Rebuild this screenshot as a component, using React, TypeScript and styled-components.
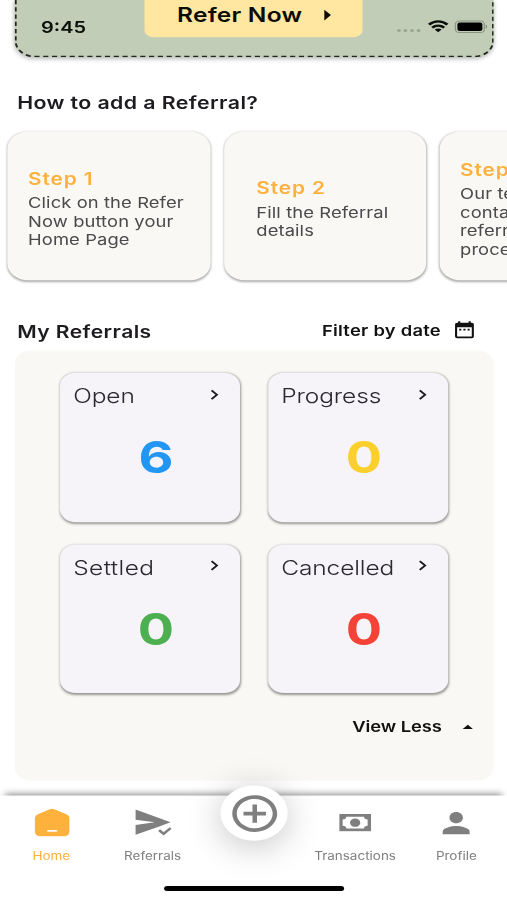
import React from "react";
import styled, { createGlobalStyle } from "styled-components";
import { MdAddCircleOutline, MdArrowDropUp, MdArrowRight, MdChevronRight, MdDateRange, MdPerson } from "react-icons/md";

const GlobalStyle = createGlobalStyle`
  * { box-sizing: border-box; }
  body { margin: 0; background: #fff; }
`;

const Viewport = styled.div`
  width: 507px;
  height: 900px;
  overflow: hidden;
  background: #fff;
`;

/* The phone screen is laid out in 414x896 points and fitted to the viewport. */
const Screen = styled.main`
  position: relative;
  display: flex;
  flex-direction: column;
  width: 414px;
  height: 896px;
  transform: scale(1.2246377, 1.0044643);
  transform-origin: 0 0;
  font-family: Inter, "Noto Sans", sans-serif;
  color: #1d1b20;
`;

const Content = styled.div`
  flex: 1;
  min-height: 0;
`;

const Banner = styled.section`
  position: relative;
  display: flex;
  justify-content: center;
  align-items: flex-start;
  height: 57px;
  margin: 0 10.8px 0 11.8px;
  padding-right: 1.4px;
  border-radius: 0 0 16px 16px;
  background: #c1cdb6;
  box-shadow: 0 1px 4px rgba(0, 0, 0, 0.28);
`;

const BannerOutline = styled.svg`
  position: absolute;
  inset: 0;
  width: 391.4px;
  height: 57px;
`;

const ReferButton = styled.button`
  display: flex;
  align-items: center;
  gap: 7.5px;
  width: 178px;
  height: 37px;
  padding: 0 0 6.5px 26.8px;
  border: 0;
  border-radius: 0 0 7px 7px;
  background: #ffe6a1;
  color: #0c0b06;
  font: 600 20px/28px Inter, sans-serif;
  letter-spacing: 0.18px;
  white-space: nowrap;
`;

const StatusBar = styled.div`
  position: absolute;
  z-index: 3;
  top: 15px;
  left: 33.5px;
  right: 16px;
  display: flex;
  align-items: center;
  height: 23px;
  color: #0b0f0a;
`;

const Clock = styled.time`
  flex: 1;
  padding-top: 1px;
  font-size: 16.3px;
  line-height: 23px;
  font-weight: 600;
`;

const SectionHeader = styled.header<{ $top: number }>`
  display: flex;
  align-items: center;
  height: 22px;
  margin: ${(p) => p.$top}px 25px 0 14px;
`;

const Title = styled.h2<{ $size: number; $spacing: number }>`
  flex: 1;
  margin: 0;
  font-size: ${(p) => p.$size}px;
  line-height: 22px;
  font-weight: 600;
  letter-spacing: ${(p) => p.$spacing}px;
`;

const FilterButton = styled.button`
  display: flex;
  align-items: center;
  gap: 8.5px;
  padding: 0;
  border: 0;
  background: none;
  color: #111;
  font: 600 15px/22px Inter, sans-serif;
  letter-spacing: 0.2px;

  svg { margin-top: -2px; }
`;

const StepStrip = styled.section`
  display: flex;
  gap: 11px;
  margin-top: 12px;
  padding: 5px 0 8px 6.3px;
  overflow: hidden;
`;

const StepCard = styled.article`
  display: flex;
  flex-direction: column;
  justify-content: center;
  align-items: center;
  flex: 0 0 165.4px;
  height: 148px;
  padding: 4.5px 5.2px 0 0;
  border-radius: 17px;
  background: #f9f8f5;
  box-shadow: 0 1px 2px rgba(0, 0, 0, 0.28), 0 1px 3px rgba(0, 0, 0, 0.08);
`;

const StepBody = styled.div<{ $width: number }>`
  width: ${(p) => p.$width}px;
`;

const StepName = styled.h3`
  margin: 0 0 2.5px;
  color: #ffb13d;
  font-size: 17px;
  line-height: 25px;
  font-weight: 600;
  letter-spacing: 0.75px;
`;

const StepText = styled.p`
  margin: 0;
  color: #4a494b;
  font-size: 15px;
  line-height: 18.5px;
  letter-spacing: 0.08px;
  white-space: pre;
`;

const Panel = styled.section`
  height: 427.5px;
  margin: 8.8px 10.6px 0 11.5px;
  padding: 22px 0 0 37.3px;
  border-radius: 13px;
  background: #f9f8f4;
`;

const TileGrid = styled.div`
  display: grid;
  grid-template-columns: 147.7px 147.7px;
  grid-auto-rows: 148.6px;
  gap: 22px 22.1px;
`;

const Tile = styled.article`
  padding: 12px 0 0 11px;
  border-radius: 13px;
  background: #f6f3f9;
  box-shadow: 0 1px 2px rgba(0, 0, 0, 0.32), 0 1px 3px rgba(0, 0, 0, 0.1);
`;

const TileHead = styled.div`
  display: flex;
  align-items: center;
  justify-content: space-between;
  height: 22px;
  padding-right: 11.7px;

  svg { margin-top: -3px; }
`;

const TileLabel = styled.span<{ $spacing?: number }>`
  font-size: 20px;
  font-weight: 300;
  letter-spacing: ${(p) => p.$spacing ?? -0.08}px;
  color: #2b2930;
`;

const TileCount = styled.strong<{ $color: string }>`
  display: block;
  width: 135px;
  margin-top: 21.9px;
  color: ${(p) => p.$color};
  font-size: 44px;
  line-height: 56px;
  font-weight: 700;
  text-align: center;
`;

const ViewLess = styled.button`
  display: flex;
  align-items: center;
  gap: 11px;
  margin: 22.6px 0 0 238.9px;
  padding: 0;
  border: 0;
  background: none;
  color: #111;
  font: 600 15px/22px Inter, sans-serif;
  letter-spacing: -0.08px;
  white-space: nowrap;
`;

const TabBar = styled.nav`
  position: relative;
  display: grid;
  grid-template-columns: repeat(5, 1fr);
  height: 104px;
  padding-left: 0.6px;
  background: #fff;
  box-shadow: 0 -6px 6px -4px rgba(0, 0, 0, 0.46);
`;

const Tab = styled.a<{ $active?: boolean }>`
  position: relative;
  z-index: 1;
  display: flex;
  flex-direction: column;
  align-items: center;
  padding-top: 9px;
  color: ${(p) => (p.$active ? "#ffb13d" : "#7f7f7f")};
  font-size: 11px;
  line-height: 14px;
`;

const TabIcon = styled.span`
  display: flex;
  align-items: center;
  justify-content: center;
  height: 36px;
  margin-bottom: 7.5px;
`;

const AddSlot = styled.div`
  display: flex;
  justify-content: center;
`;

const AddButton = styled.button`
  display: flex;
  align-items: center;
  justify-content: center;
  width: 55.4px;
  height: 55px;
  margin: -10px 0 0 0.8px;
  padding: 0;
  border: 0;
  border-radius: 50%;
  background: #fff;
  color: #7f7f7f;
  box-shadow: 0 5px 32px rgba(0, 0, 0, 0.24);
`;

const HomeIndicator = styled.div`
  position: absolute;
  z-index: 2;
  left: 133.5px;
  bottom: 9px;
  width: 147.5px;
  height: 5.5px;
  border-radius: 3px;
  background: #000;
`;

const StatusIcons = () => (
  <svg width="74" height="18" viewBox="0 0 74 18" fill="none">
    <g fill="#9aa492">
      <circle cx="1.8" cy="12.4" r="1.5" />
      <circle cx="7" cy="12.4" r="1.5" />
      <circle cx="12.4" cy="12.4" r="1.5" />
      <circle cx="17.8" cy="12.4" r="1.5" />
    </g>
    <g stroke="#0b0f0a" strokeWidth="2.4">
      <path d="M26.3 6.6C30.7 2.2 36.9 2.2 41.3 6.6" />
      <path d="M28.9 9.6C31.9 6.8 35.7 6.8 38.7 9.6" />
    </g>
    <path d="M31 11.4C32.6 10 35 10 36.600 11.4L33.8 14.2Z" fill="#0b0f0a" />
    <rect x="47.9" y="2.8" width="23.6" height="11.6" rx="3.3" stroke="#8a9482" />
    <rect x="49.5" y="4.4" width="20.4" height="8.4" rx="1.9" fill="#000" />
    <path d="M72.6 6.7v3.8c1-.3 1.4-1.1 1.4-1.9s-.4-1.6-1.4-1.9Z" fill="#8a9482" />
  </svg>
);

const HomeIcon = () => (
  <svg width="30" height="30" viewBox="0 0 30 30">
    <path d="M13.6 1.6a4.4 4.4 0 0 1 3.800 0L27.6 6.900A3.800 3.800 0 0 1 29.700 10.300V24.400a4.200 4.200 0 0 1-4.200 4.200H5.700a4.200 4.200 0 0 1-4.200-4.200V10.300a3.800 3.800 0 0 1 2.100-3.400Z" fill="#ffb13d" />
    <path d="M12.200 23.200h6.800" stroke="#fff" strokeWidth="1.600" strokeLinecap="round" />
  </svg>
);

const SendCheckIcon = () => (
  <svg width="30" height="26" viewBox="0 0 30 26">
    <path d="M.7 0 29.300 12.700 19.500 17.200.7 25V15.400L16.500 12.700.7 10Z" fill="#7f7f7f" />
    <path d="m18.300 20.100 4.600 4.600 6.900-6.600" fill="none" stroke="#fff" strokeWidth="5" />
    <path d="m19.900 20.400 3.700 3.800 5.800-5.900" fill="none" stroke="#7f7f7f" strokeWidth="2.300" />
  </svg>
);

const CashIcon = () => (
  <svg width="26" height="18" viewBox="0 0 26 18">
    <path
      fillRule="evenodd"
      d="M0 .5H26V17.500H0ZM5.800 3.200C5.800 4.800 4.600 5.800 2.800 5.800V12.200C4.600 12.200 5.800 13.200 5.800 14.800H20.200C20.200 13.200 21.400 12.200 23.200 12.200V5.800C21.400 5.800 20.200 4.800 20.200 3.200Z"
      fill="#7f7f7f"
    />
    <circle cx="13" cy="9" r="4.200" fill="#7f7f7f" />
  </svg>
);

const steps = [
  { name: "Step 1", text: "Click on the Refer\nNow button your\nHome Page", width: 127 },
  { name: "Step 2", text: "Fill the Referral\ndetails", width: 107 },
  { name: "Step 3", text: "Our team will\ncontact the\nreferral and\nprocess", width: 127 },
];

const tiles = [
  { label: "Open", count: 6, color: "#2196f3" },
  { label: "Progress", count: 0, color: "#fbd02d" },
  { label: "Settled", count: 0, color: "#4caf50", spacing: 0.33 },
  { label: "Cancelled", count: 0, color: "#f44336" },
];

export default function App() {
  return (
    <Viewport>
      <GlobalStyle />
      <Screen>
        <StatusBar>
          <Clock>9:45</Clock>
          <StatusIcons />
        </StatusBar>
        <Content>
          <Banner>
            <BannerOutline viewBox="0 0 391.4 57" fill="none">
              <path d="M.8 0V41A15.2 15.2 0 0 0 16 56.2H375.4A15.2 15.2 0 0 0 390.6 41V0" stroke="#222820" strokeWidth="1.6" strokeDasharray="4.2 3" />
            </BannerOutline>
            <ReferButton>
              Refer Now
              <MdArrowRight size={26} />
            </ReferButton>
          </Banner>
          <SectionHeader $top={35}>
            <Title $size={17.4} $spacing={0.34}>How to add a Referral?</Title>
          </SectionHeader>
          <StepStrip>
            {steps.map((step) => (
              <StepCard key={step.name}>
                <StepBody $width={step.width}>
                  <StepName>{step.name}</StepName>
                  <StepText>{step.text}</StepText>
                </StepBody>
              </StepCard>
            ))}
          </StepStrip>
          <SectionHeader $top={31.5}>
            <Title $size={17.2} $spacing={0.36}>My Referrals</Title>
            <FilterButton>
              Filter by date
              <MdDateRange size={20.5} />
            </FilterButton>
          </SectionHeader>
          <Panel>
            <TileGrid>
              {tiles.map((tile) => (
                <Tile key={tile.label}>
                  <TileHead>
                    <TileLabel $spacing={tile.spacing}>{tile.label}</TileLabel>
                    <MdChevronRight size={20} />
                  </TileHead>
                  <TileCount $color={tile.color}>{tile.count}</TileCount>
                </Tile>
              ))}
            </TileGrid>
            <ViewLess>
              View Less
              <MdArrowDropUp size={20} />
            </ViewLess>
          </Panel>
        </Content>
        <TabBar>
          <Tab $active>
            <TabIcon><HomeIcon /></TabIcon>
            Home
          </Tab>
          <Tab>
            <TabIcon><SendCheckIcon /></TabIcon>
            Referrals
          </Tab>
          <AddSlot>
            <AddButton aria-label="Add referral">
              <MdAddCircleOutline size={44} />
            </AddButton>
          </AddSlot>
          <Tab>
            <TabIcon><CashIcon /></TabIcon>
            Transactions
          </Tab>
          <Tab>
            <TabIcon><MdPerson size={33} /></TabIcon>
            Profile
          </Tab>
        </TabBar>
        <HomeIndicator />
      </Screen>
    </Viewport>
  );
}
